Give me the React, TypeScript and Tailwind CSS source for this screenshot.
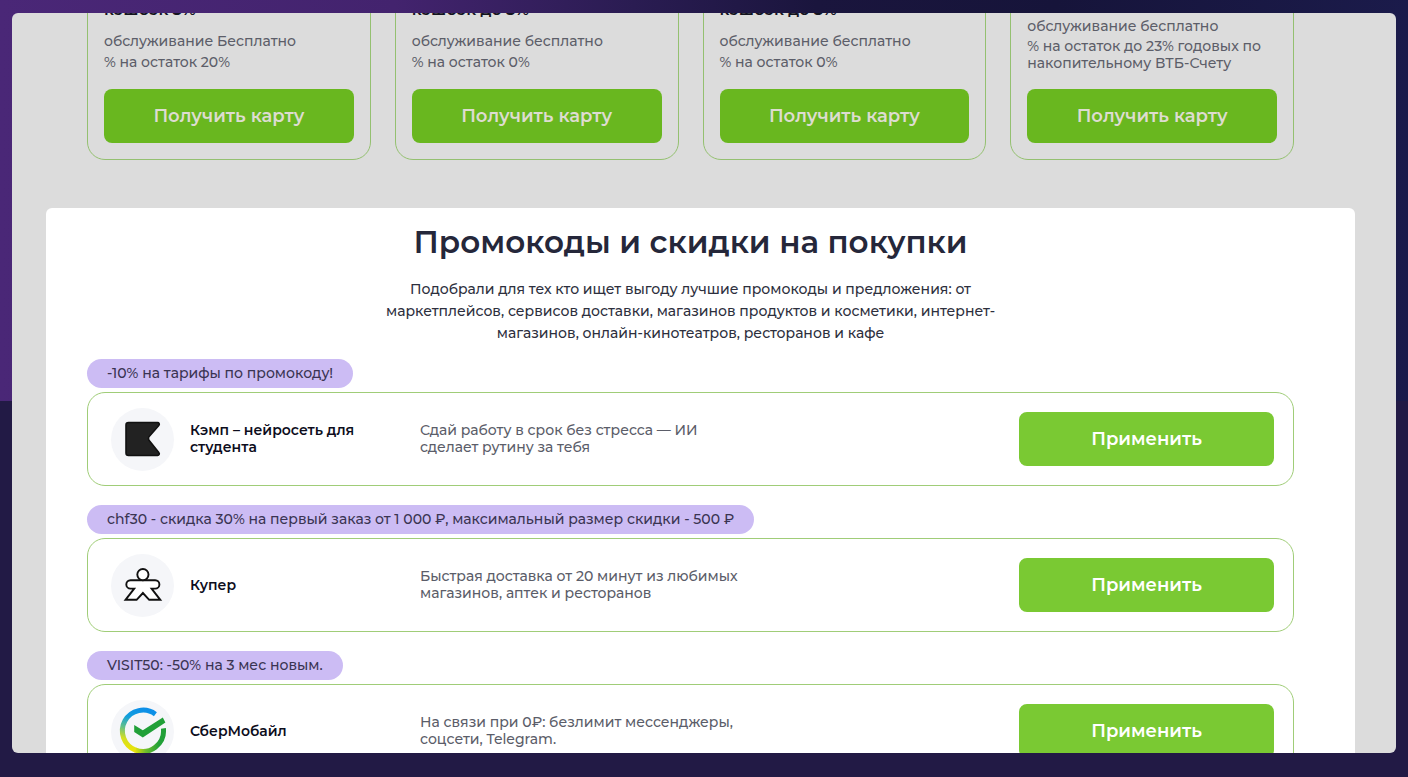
import type { ReactNode } from 'react';

const cards = [
  { cashback: 'кэшбэк 3%', terms: ['обслуживание Бесплатно', '% на остаток 20%'] },
  { cashback: 'кэшбэк до 3%', terms: ['обслуживание бесплатно', '% на остаток 0%'] },
  { cashback: 'кэшбэк до 3%', terms: ['обслуживание бесплатно', '% на остаток 0%'] },
  {
    cashback: 'кэшбэк до 3%',
    terms: ['обслуживание бесплатно', '% на остаток до 23% годовых по\nнакопительному ВТБ-Счету'],
  },
];

function CampLogo() {
  return (
    <svg viewBox="0 0 63 63" className="w-full h-full" aria-hidden="true">
      <path
        d="M17.5 14.5H46.5a1.7 1.7 0 0 1 1.3 2.9L38.6 28a3.4 3.4 0 0 0 0 5L47.8 44.6A1.7 1.7 0 0 1 46.5 47.5H17.5a2.5 2.5 0 0 1-2.5-2.5V17a2.5 2.5 0 0 1 2.5-2.5z"
        fill="#222"
        stroke="#111"
        strokeWidth="1.6"
        strokeLinejoin="round"
      />
    </svg>
  );
}

function KuperLogo() {
  return (
    <svg viewBox="0 0 63 63" className="w-full h-full" aria-hidden="true">
      <g fill="#fff" stroke="#111" strokeWidth="1.9" strokeLinejoin="miter">
        <path d="M19.5 26.2H44.2a4.2 4.2 0 0 1 0 8.4H40.6L49.3 45.8H38.2L31.9 39L25.6 45.8H14.5L23.2 34.6H19.5a4.2 4.2 0 0 1 0-8.4z" />
        <circle cx="31.9" cy="20.6" r="5.6" />
      </g>
    </svg>
  );
}

function SberLogo() {
  return (
    <svg viewBox="0 0 63 63" className="w-full h-full" aria-hidden="true">
      <defs>
        <linearGradient id="sber-left" gradientUnits="userSpaceOnUse" x1="34" y1="10" x2="22" y2="52">
          <stop offset="0" stopColor="#0c8fe8" />
          <stop offset="0.25" stopColor="#139fdc" />
          <stop offset="0.5" stopColor="#5fc08a" />
          <stop offset="0.75" stopColor="#d3de24" />
          <stop offset="1" stopColor="#f0e500" />
        </linearGradient>
        <linearGradient id="sber-right" gradientUnits="userSpaceOnUse" x1="24" y1="0" x2="48" y2="0">
          <stop offset="0" stopColor="#e2e20c" />
          <stop offset="0.45" stopColor="#6fbd2c" />
          <stop offset="1" stopColor="#21a038" />
        </linearGradient>
      </defs>
      <g fill="none" strokeWidth="5">
        <path d="M44.4 14.2A20.7 20.7 0 1 0 24.5 50.1" stroke="url(#sber-left)" />
        <path d="M24 49.9A20.7 20.7 0 0 0 52.4 28.4" stroke="url(#sber-right)" />
      </g>
      <path d="M23.2 25V32L31.8 37.4L54.4 22.4L51.8 17.4L31.8 30.2z" fill="#21a038" />
    </svg>
  );
}

type Promo = { tag: string; name: string; text: string; logo: ReactNode };

const promos: Promo[] = [
  {
    tag: '-10% на тарифы по промокоду!',
    name: 'Кэмп – нейросеть для\nстудента',
    text: 'Сдай работу в срок без стресса — ИИ\nсделает рутину за тебя',
    logo: <CampLogo />,
  },
  {
    tag: 'chf30 - скидка 30% на первый заказ от 1 000 ₽, максимальный размер скидки - 500 ₽',
    name: 'Купер',
    text: 'Быстрая доставка от 20 минут из любимых\nмагазинов, аптек и ресторанов',
    logo: <KuperLogo />,
  },
  {
    tag: 'VISIT50: -50% на 3 мес новым.',
    name: 'СберМобайл',
    text: 'На связи при 0₽: безлимит мессенджеры,\nсоцсети, Telegram.',
    logo: <SberLogo />,
  },
];

export default function App() {
  return (
    <div className="h-screen flex flex-col px-3 pt-[13px] pb-6 bg-[#221a45] bg-[linear-gradient(90deg,#4a2777_0%,#43236e_28%,#2a1c52_45%,#1a153d_58%,#16143a_75%,#1b1b4b_100%)] bg-[length:100%_401px] bg-no-repeat font-['Montserrat','Inter',sans-serif] font-medium">
      <main className="flex-1 min-h-0 overflow-hidden rounded-md bg-[#dcdcdc]">
        <section className="-mt-[46px] pl-[75px] pr-[102px] grid grid-cols-4 gap-6">
          {cards.map((card, i) => (
            <article
              key={i}
              className="flex flex-col justify-end rounded-[18px] border border-[#94c070] p-4"
            >
              <h3 className="mb-2.5 text-base leading-[22px] font-semibold text-[#14141f]">{card.cashback}</h3>
              <ul className="mb-4 text-sm leading-[17px] text-[#5c5e69]">
                {card.terms.map((term) => (
                  <li key={term} className="flex min-h-[21px] items-center py-px whitespace-pre-line">
                    {term}
                  </li>
                ))}
              </ul>
              <button
                type="button"
                className="h-[54px] shrink-0 rounded-lg bg-[#69b71f] text-lg font-semibold text-[#dddcd0]"
              >
                Получить карту
              </button>
            </article>
          ))}
        </section>

        <section className="mt-12 ml-[34px] mr-[41px] rounded-md bg-white pl-[41px] pr-[61px] pt-[11px] pb-10">
          <h2 className="text-center text-[31px] leading-[46px] font-semibold text-[#25273a]">
            Промокоды и скидки на покупки
          </h2>
          <p className="mt-[13px] text-center text-sm leading-[22px] text-[#2d2f3d]">
            Подобрали для тех кто ищет выгоду лучшие промокоды и предложения: от
            <br />
            маркетплейсов, сервисов доставки, магазинов продуктов и косметики, интернет-
            <br />
            магазинов, онлайн-кинотеатров, ресторанов и кафе
          </p>

          <ul className="mt-[15px] flex flex-col gap-[19px]">
            {promos.map((promo) => (
              <li key={promo.name} className="flex flex-col items-start gap-1">
                <span className="rounded-full bg-[#ccbcf4] px-5 py-1 text-sm leading-[21px] text-[#3a3452]">
                  {promo.tag}
                </span>
                <div className="flex w-full min-h-[94px] items-center rounded-[18px] border border-[#a0cd78] pl-[23px] pr-[19px]">
                  <div className="size-[63px] shrink-0 rounded-full bg-[#f5f6f9]">{promo.logo}</div>
                  <h3 className="ml-4 w-[230px] shrink-0 whitespace-pre-line text-sm leading-[17px] font-semibold text-[#0d0d1c]">
                    {promo.name}
                  </h3>
                  <p className="flex-1 whitespace-pre-line text-sm leading-[17px] text-[#5b5d69]">{promo.text}</p>
                  <button
                    type="button"
                    className="h-[54px] w-[255px] shrink-0 rounded-lg bg-[#7ac933] text-lg font-semibold text-white"
                  >
                    Применить
                  </button>
                </div>
              </li>
            ))}
          </ul>
        </section>
      </main>
    </div>
  );
}
